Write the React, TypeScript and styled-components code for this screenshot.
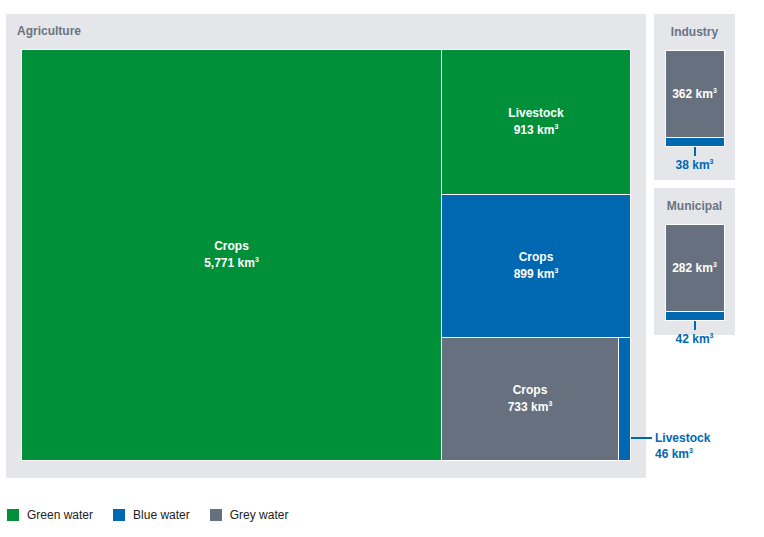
import React from 'react'
import styled, { createGlobalStyle } from 'styled-components'

const GREEN = '#00903a'
const BLUE = '#0067b1'
const GREY = '#67707e'
const PANEL = '#e5e6ea'
const LABEL = '#6b7381'

const Global = createGlobalStyle`
  body { margin: 0; background: #fff; font-family: "Liberation Sans", Arial, sans-serif; }
`

const Page = styled.div`
  width: 764px;
  height: 537px;
  position: relative;
`

const Top = styled.div`
  display: flex;
  gap: 8px;
  padding: 14px 0 0 6px;
`

const Panel = styled.div<{ $w: number; $h: number }>`
  background: ${PANEL};
  width: ${(p) => p.$w}px;
  height: ${(p) => p.$h}px;
  box-sizing: border-box;
  position: relative;
`

const PanelTitle = styled.div<{ $center?: boolean }>`
  color: ${LABEL};
  font-size: 12px;
  font-weight: bold;
  padding: ${(p) => (p.$center ? '11px 0 0' : '10px 0 0 11px')};
  text-align: ${(p) => (p.$center ? 'center' : 'left')};
  height: 26px;
  box-sizing: border-box;
`

const Treemap = styled.div`
  margin: 9px 0 0 15px;
  width: 610px;
  height: 412px;
  box-sizing: border-box;
  border: 1px solid #fff;
  background: #fff;
  display: grid;
  grid-template-columns: 419px 176px 11px;
  grid-template-rows: 144px 142px 122px;
  gap: 1px;
`

const Cell = styled.div<{ $c: string }>`
  background: ${(p) => p.$c};
  color: #fff;
  font-size: 12px;
  font-weight: bold;
  line-height: 17px;
  display: flex;
  flex-direction: column;
  align-items: center;
  justify-content: center;
  text-align: center;
`

const Sup = styled.sup`
  font-size: 7px;
  vertical-align: 5px;
  line-height: 0;
`

const Side = styled.div`
  display: flex;
  flex-direction: column;
  gap: 8px;
`

const MiniBox = styled.div`
  margin: 10px auto 0;
  width: 60px;
  box-sizing: border-box;
  border: 1px solid #fff;
  background: #fff;
  display: flex;
  flex-direction: column;
  gap: 1px;
`

const MiniGrey = styled.div<{ $h: number }>`
  height: ${(p) => p.$h}px;
  background: ${GREY};
  color: #fff;
  font-size: 12px;
  font-weight: bold;
  display: flex;
  align-items: center;
  justify-content: center;
`

const MiniBlue = styled.div`
  height: 8px;
  background: ${BLUE};
`

const Stem = styled.div`
  width: 2px;
  height: 9px;
  background: ${BLUE};
  margin: 0 auto;
`

const BlueLabel = styled.div`
  color: ${BLUE};
  font-size: 12px;
  font-weight: bold;
  text-align: center;
  margin-top: 2px;
`

const Callout = styled.div`
  position: absolute;
  left: 625px;
  top: 416px;
  display: flex;
  align-items: flex-start;
  gap: 3px;
`

const CalloutLine = styled.div`
  width: 21px;
  height: 2px;
  background: ${BLUE};
  margin-top: 7px;
`

const CalloutText = styled.div`
  color: ${BLUE};
  font-size: 12px;
  font-weight: bold;
  line-height: 16px;
`

const Legend = styled.div`
  display: flex;
  gap: 20px;
  padding: 30px 0 0 7px;
`

const LegendItem = styled.div`
  display: flex;
  align-items: center;
  gap: 8px;
  font-size: 12px;
  color: #222;
`

const Swatch = styled.span<{ $c: string }>`
  width: 12px;
  height: 12px;
  background: ${(p) => p.$c};
  display: inline-block;
`

const Km = ({ v }: { v: string }) => (
  <span>
    {v} km<Sup>3</Sup>
  </span>
)

function Mini({ title, grey, blue, h }: { title: string; grey: string; blue: string; h: number }) {
  return (
    <Panel $w={81} $h={h}>
      <PanelTitle $center>{title}</PanelTitle>
      <MiniBox>
        <MiniGrey $h={86}>
          <Km v={grey} />
        </MiniGrey>
        <MiniBlue />
      </MiniBox>
      <Stem />
      <BlueLabel>
        <Km v={blue} />
      </BlueLabel>
    </Panel>
  )
}

export default function App() {
  return (
    <Page>
      <Global />
      <Top>
        <Panel $w={640} $h={464}>
          <PanelTitle>Agriculture</PanelTitle>
          <Treemap>
            <Cell $c={GREEN} style={{ gridRow: '1 / 4', gridColumn: 1 }}>
              <span>Crops</span>
              <Km v="5,771" />
            </Cell>
            <Cell $c={GREEN} style={{ gridColumn: '2 / 4' }}>
              <span>Livestock</span>
              <Km v="913" />
            </Cell>
            <Cell $c={BLUE} style={{ gridColumn: '2 / 4' }}>
              <span>Crops</span>
              <Km v="899" />
            </Cell>
            <Cell $c={GREY}>
              <span>Crops</span>
              <Km v="733" />
            </Cell>
            <Cell $c={BLUE} />
          </Treemap>
          <Callout>
            <CalloutLine />
            <CalloutText>
              Livestock
              <br />
              <Km v="46" />
            </CalloutText>
          </Callout>
        </Panel>
        <Side>
          <Mini title="Industry" grey="362" blue="38" h={166} />
          <Mini title="Municipal" grey="282" blue="42" h={147} />
        </Side>
      </Top>
      <Legend>
        <LegendItem>
          <Swatch $c={GREEN} />
          Green water
        </LegendItem>
        <LegendItem>
          <Swatch $c={BLUE} />
          Blue water
        </LegendItem>
        <LegendItem>
          <Swatch $c={GREY} />
          Grey water
        </LegendItem>
      </Legend>
    </Page>
  )
}
